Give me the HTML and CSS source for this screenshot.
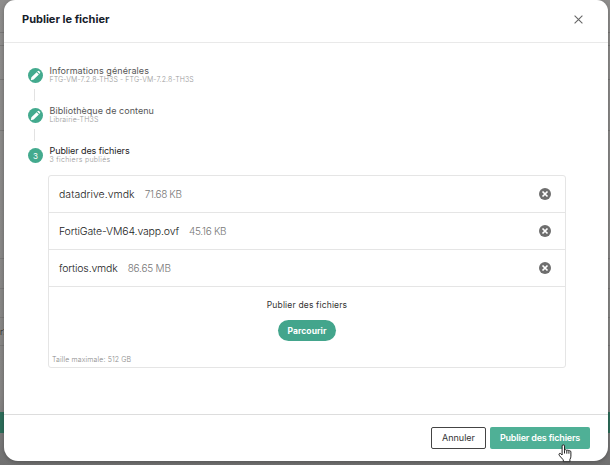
FILE: index.html
```html
<!DOCTYPE html>
<html lang="fr">
<head>
<meta charset="utf-8">
<title>Publier le fichier</title>
<link rel="stylesheet" href="styles.css">
</head>
<body>
<svg width="0" height="0" class="defs" aria-hidden="true">
  <symbol id="pencil" viewBox="0 0 14 14"><path d="M2 12l.6-3 5.600-5.600 2.400 2.400-5.600 5.600zM8.800 2.800l.7-.7q.6-.5 1.200 0l1.200 1.200q.5.600 0 1.200l-.7.7z"/></symbol>
  <symbol id="remove" viewBox="0 0 12 12"><circle cx="6" cy="6" r="6"/><path class="cross" d="M3.500 3.500l5 5M8.500 3.500l-5 5"/></symbol>
</svg>
<div class="page">
  <div class="line h32"></div><div class="line h13"></div><div class="line h34"></div><div class="line h51"></div><div class="line h128"></div><div class="line h30"></div><div class="line h29"></div><div class="line h28 edge"><span>r7</span></div><div class="gap"></div><div class="band"></div>
</div>
<section class="modal">
  <header class="header">
    <h1 class="title">Publier le fichier</h1>
    <svg class="close" viewBox="0 0 9 9"><path d="M.6.6l7.8 7.8M8.4.6L.6 8.4"/></svg>
  </header>
  <main class="content">
    <ol class="steps">
      <li class="step"><span class="dot"><svg><use href="#pencil"/></svg></span><div><div class="name n1">Informations générales</div><div class="note s1">FTG-VM-7.2.8-TH3S - FTG-VM-7.2.8-TH3S</div></div></li>
      <li class="step"><span class="dot"><svg><use href="#pencil"/></svg></span><div><div class="name n2">Bibliothèque de contenu</div><div class="note s2">Librairie-TH3S</div></div></li>
      <li class="step"><span class="dot">3</span><div><div class="name n3">Publier des fichiers</div><div class="note s3">3 fichiers publiés</div></div></li>
    </ol>
    <div class="files">
      <div class="file"><span class="filename f1">datadrive.vmdk</span><span class="size z1">71.68 KB</span><svg class="remove"><use href="#remove"/></svg></div>
      <div class="file"><span class="filename f2">FortiGate-VM64.vapp.ovf</span><span class="size z2">45.16 KB</span><svg class="remove"><use href="#remove"/></svg></div>
      <div class="file"><span class="filename f3">fortios.vmdk</span><span class="size z3">86.65 MB</span><svg class="remove"><use href="#remove"/></svg></div>
      <div class="drop">
        <div class="prompt">Publier des fichiers</div>
        <button class="browse">Parcourir</button>
        <div class="limit">Taille maximale: 512 GB</div>
      </div>
    </div>
  </main>
  <footer class="footer">
    <button class="btn cancel">Annuler</button>
    <button class="btn publish">Publier des fichiers</button>
  </footer>
</section>
<svg class="cursor" viewBox="0 0 14 19"><path d="M4.1 11V2.1q0-1.3 1.2-1.3T6.5 2.1v4.4q.2-.8 1.1-.8 1 0 1.2 1 .3-.7 1.1-.6.9.1 1 1 .3-.5 1-.4 1 .2 1 1.4v4.1q0 1.8-1 3.2v2.3H5.300v-2Q3 13.900 1.300 11.300 .500 9.900 1.500 9.400q.8-.3 1.600.600z"/><path d="M6.500 6.500v3M8.800 6.800v2.900M10.900 7.200v2.500"/></svg>
</body>
</html>
```
FILE: styles.css
```css
* { box-sizing: border-box; margin: 0; padding: 0; }
body { position: relative; width: 610px; height: 465px; overflow: hidden; background: #838281; font-family: Inter, "Open Sans", sans-serif; }
.defs { position: absolute; }
.page { height: 465px; display: flex; flex-direction: column; background: linear-gradient(#8e8d8c, #868584 85%, #707070); }
.line { flex: none; border-bottom: 1px solid #7a7978; }
.h32 { height: 33px; } .h13 { height: 13px; } .h34 { height: 34px; } .h51 { height: 51px; } .h128 { height: 128px; } .h30 { height: 30px; } .h29 { height: 29px; } .h28 { height: 28px; }
.edge { display: flex; align-items: center; font-size: 8px; color: #333; }
.gap { height: 66px; }
.band { height: 21px; background: #2d6e5a; }
.modal { position: absolute; left: 4px; top: 0; width: 604px; height: 461px; display: flex; flex-direction: column; background: #fff; border-radius: 11px 11px 14px 14px; box-shadow: 0 1px 4px #0004; }
.header { height: 43px; display: flex; justify-content: space-between; align-items: center; padding: 0 25px 4px 18px; border-bottom: 1px solid #e9e9e9; }
.title { font-size: 11px; line-height: 16px; font-weight: 650; color: #15202a; white-space: nowrap; }
.close { width: 9px; height: 9px; fill: none; stroke: #666; stroke-width: 1.1; }
.content { flex: 1; padding: 23px 42px 0 24px; }
.steps { list-style: none; }
.step { position: relative; height: 40px; display: flex; gap: 6.5px; align-items: flex-start; white-space: nowrap; }
.step:not(:last-child)::after { content: ""; position: absolute; left: 6px; top: 23px; width: 1px; height: 12px; background: #e2e2e2; }
.dot { width: 15px; height: 15px; margin-top: 2px; border-radius: 50%; background: #43aa8e; color: #fff; font-size: 8px; display: flex; align-items: center; justify-content: center; }
.dot svg { width: 13px; height: 13px; fill: #fff; }
.name { height: 9px; font-size: 9px; line-height: 10px; font-weight: 400; color: #555; }
.n1 { letter-spacing: .08px; }
.n2 { letter-spacing: .05px; }
.n3 { color: #222; letter-spacing: -.08px; }
.note { font-size: 7px; line-height: 10px; font-weight: 300; color: #999; }
.s1 { letter-spacing: .1px; }
.s2 { letter-spacing: .14px; }
.s3 { letter-spacing: .3px; }
.files { width: 518px; height: 193px; margin: -11px 0 0 20px; border: 1px solid #e5e5e5; border-radius: 3px; white-space: nowrap; }
.file { height: 37px; display: flex; align-items: center; padding: 0 14px 0 10px; border-bottom: 1px solid #e5e5e5; font-size: 10.5px; font-weight: 300; color: #222; }
.f1 { letter-spacing: .03px; }
.f2 { letter-spacing: -.14px; }
.f3 { letter-spacing: -.16px; }
.size { margin-left: 10px; color: #777; font-size: 10px; }
.z1 { letter-spacing: -.4px; }
.z2 { letter-spacing: -.3px; }
.z3 { letter-spacing: -.2px; }
.remove { width: 12px; height: 12px; margin-left: auto; fill: #6e6e6e; }
.cross { stroke: #fff; stroke-width: 1.7; }
.drop { display: flex; flex-direction: column; align-items: center; padding-top: 12px; }
.prompt { font-size: 8.5px; line-height: 12px; color: #333; letter-spacing: .17px; }
button { font-family: inherit; white-space: nowrap; }
.browse { width: 58px; height: 21px; margin-top: 9px; border: 0; border-radius: 11px; background: #43a58c; color: #fff; font-size: 8.5px; font-weight: 650; letter-spacing: .05px; }
.limit { align-self: flex-start; margin: 14px 0 0 3px; font-size: 7px; line-height: 10px; font-weight: 300; color: #888; letter-spacing: .12px; }
.footer { height: 47px; display: flex; justify-content: flex-end; gap: 4px; padding: 12px 18px 0 0; border-top: 1px solid #ddd; }
.btn { height: 22px; padding-bottom: 2px; border-radius: 2px; font-size: 9px; }
.cancel { width: 55px; border: 1px solid #444; background: #fff; color: #333; }
.publish { width: 100px; border: 0; background: #4fb096; color: #fff; font-weight: 600; letter-spacing: -.18px; }
.cursor { position: absolute; left: 558px; top: 444px; width: 14px; height: 19px; fill: #fff; stroke: #222; stroke-width: 1; }
```
